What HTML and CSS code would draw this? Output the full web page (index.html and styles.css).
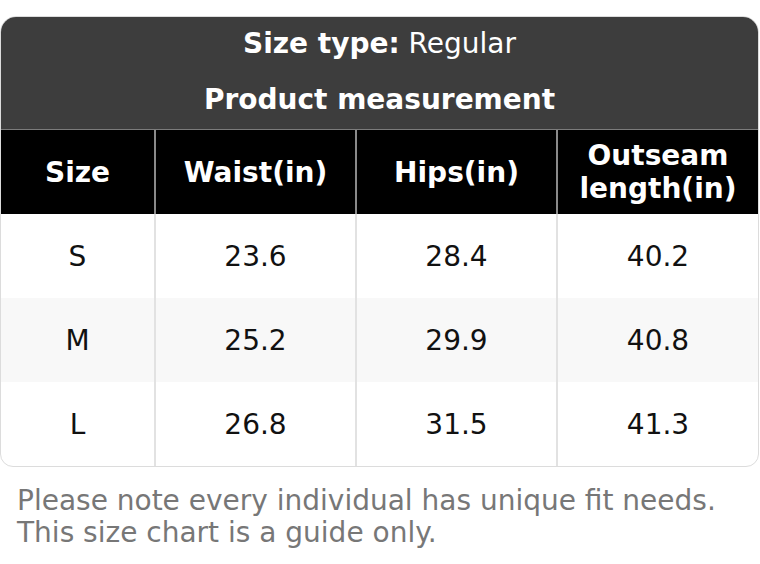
FILE: index.html
```html
<!DOCTYPE html>
<html lang="en">
<head>
    <meta charset="UTF-8">
    <meta name="viewport" content="width=device-width, initial-scale=1.0">
    <title>Size Chart</title>
    <link rel="stylesheet" href="styles.css">
</head>
<body>
    <div class="size-chart">
        <div class="chart-card">
            <div class="chart-head">
                <p class="head-line"><strong>Size type:</strong> Regular</p>
                <p class="head-line"><strong>Product measurement</strong></p>
            </div>
            <table class="chart-table">
                <colgroup>
                    <col style="width: 154px">
                    <col style="width: 201px">
                    <col style="width: 201px">
                    <col>
                </colgroup>
                <thead>
                    <tr>
                        <th>Size</th>
                        <th>Waist(in)</th>
                        <th>Hips(in)</th>
                        <th>Outseam<br>length(in)</th>
                    </tr>
                </thead>
                <tbody>
                    <tr>
                        <td>S</td>
                        <td>23.6</td>
                        <td>28.4</td>
                        <td>40.2</td>
                    </tr>
                    <tr>
                        <td>M</td>
                        <td>25.2</td>
                        <td>29.9</td>
                        <td>40.8</td>
                    </tr>
                    <tr>
                        <td>L</td>
                        <td>26.8</td>
                        <td>31.5</td>
                        <td>41.3</td>
                    </tr>
                </tbody>
            </table>
        </div>
        <p class="note">Please note every individual has unique fit needs.<br>This size chart is a guide only.</p>
    </div>
</body>
</html>
```

FILE: styles.css
```css
body {
    font-family: "DejaVu Sans", sans-serif;
    background-color: white;
    margin: 0;
    padding: 0;
}
.size-chart {
    padding-top: 16px;
}
.chart-card {
    border: 1px solid #dcdcdc;
    border-radius: 16px 16px 13px 13px;
    overflow: hidden;
    margin-right: 1px;
}
.chart-head {
    background-color: #3d3d3d;
    color: white;
    text-align: center;
    border-bottom: 1px solid #7c7c7c;
}
.head-line {
    margin: 0;
    height: 56px;
    line-height: 54px;
    font-size: 28px;
}
.chart-table {
    width: 100%;
    border-collapse: collapse;
    table-layout: fixed;
    font-size: 28px;
    text-align: center;
}
.chart-table th {
    background-color: black;
    color: white;
    height: 84px;
    padding: 0;
    line-height: 33px;
    border-left: 2px solid #8a8a8a;
}
.chart-table td {
    height: 84px;
    padding: 0;
    color: #111;
    border-left: 2px solid #e2e2e2;
}
.chart-table th:first-child, .chart-table td:first-child {
    border-left: none;
}
.chart-table tbody tr:nth-child(even) {
    background-color: #f8f8f8;
}
.note {
    margin: 18px 0 0 17px;
    font-size: 28px;
    line-height: 32px;
    color: #777;
}
```
